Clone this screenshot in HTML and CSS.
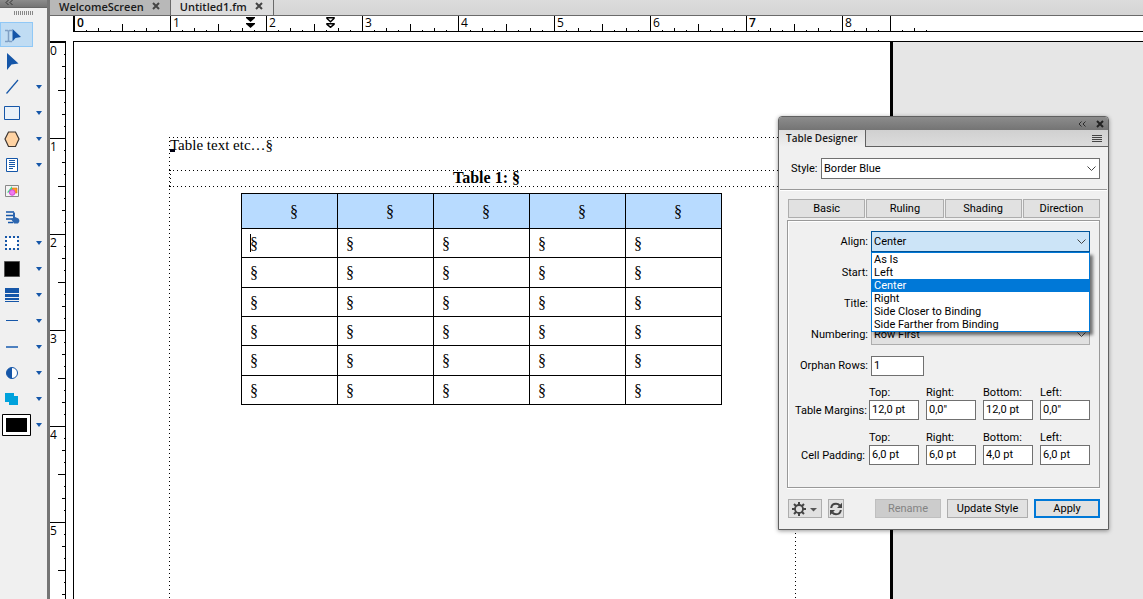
FILE: index.html
```html
<!DOCTYPE html>
<html lang="en">
<head>
<meta charset="utf-8">
<title>Untitled1.fm</title>
<link rel="stylesheet" href="styles.css">
</head>
<body>
<aside class="tools">
  <div class="tools-head"><svg width="8" height="6" viewBox="0 0 8 6"><path d="M3.500 0 1 2.500 3.500 5M7.500 0 5 2.500 7.500 5" fill="none" stroke="#333"/></svg></div>
  <div class="grip"></div>
  <div class="tool"><button class="tool-btn selected" aria-label="Smart select"><svg viewBox="0 0 33 26"><path d="M5 8.500h2.500l1 1 1-1H12M8.500 9v10M5 19.500h2.500l1-1 1 1H12" fill="none" stroke="#7f9fc4" stroke-width="1.500"/><path d="M12.500 7v12.500l3-3.500 5.500-1z" fill="#1556a8"/></svg></button></div>
  <div class="tool"><button class="tool-btn" aria-label="Select object"><svg viewBox="0 0 33 26"><path d="M7 5v17l4.500-5.500 7-1z" fill="#1556a8"/></svg></button></div>
  <div class="tool"><button class="tool-btn" aria-label="Line"><svg viewBox="0 0 33 26"><path d="M6.500 19.500 18 6" stroke="#1556a8" stroke-width="1.200"/></svg></button><i class="caret"></i></div>
  <div class="tool"><button class="tool-btn" aria-label="Rectangle"><svg viewBox="0 0 33 26"><path d="M4.500 6.500h15v13h-15z" fill="#eaf1f8" stroke="#1556a8"/></svg></button><i class="caret"></i></div>
  <div class="tool"><button class="tool-btn" aria-label="Polygon"><svg viewBox="0 0 33 26"><path d="M8.500 6h7l3.500 7-3.500 7.500h-7L5 13z" fill="#ffd3a3" stroke="#3d3530" stroke-width="1.200"/></svg></button><i class="caret"></i></div>
  <div class="tool"><button class="tool-btn" aria-label="Text frame"><svg viewBox="0 0 33 26"><path d="M6.500 6.500h11v13h-11z" fill="#fff" stroke="#1556a8"/><path d="M9 8.500h6M9 10.500h6M9 12.500h6M9 14.500h6M9 16.500h4" stroke="#1556a8"/></svg></button><i class="caret"></i></div>
  <div class="tool"><button class="tool-btn" aria-label="Anchored frame"><svg viewBox="0 0 33 26"><path d="M5.500 7.500h13v11h-13z" fill="#f4f4f4" stroke="#888"/><path d="M12 10h5v5h-5z" fill="#ff9a1f" stroke="#d77b10" stroke-width=".6"/><path d="M7 14.500 12 8v6.500z" fill="#3ddc84"/><circle cx="12.200" cy="14.500" r="2.800" fill="#f07cf0" stroke="#d545d5"/></svg></button></div>
  <div class="tool"><button class="tool-btn" aria-label="Hotspot"><svg viewBox="0 0 33 26"><path d="M6 8h8M6 11.500h8M6 15h7M8 18.500h5" stroke="#1556a8" stroke-width="1.700"/><path d="M13 8.500h2V13l3.500 1.500c1.500 2 1 3.500-.5 5h-4l-3-4.500 2-.5z" fill="#2d66b0"/></svg></button></div>
  <div class="tool"><button class="tool-btn" aria-label="Border"><svg viewBox="0 0 33 26"><path d="M6.500 7.500h11v11h-11z" fill="#fff"/><path d="M5 7h14M5 19h14" stroke="#1556a8" stroke-width="2" stroke-dasharray="2"/><path d="M6 6v14M18 6v14" stroke="#1556a8" stroke-width="2" stroke-dasharray="2"/></svg></button><i class="caret"></i></div>
  <div class="tool"><button class="tool-btn" aria-label="Fill"><svg viewBox="0 0 33 26"><path d="M4.500 5.500h15v15h-15z" stroke="#555"/></svg></button><i class="caret"></i></div>
  <div class="tool"><button class="tool-btn" aria-label="Line width"><svg viewBox="0 0 33 26"><path d="M5 6h14v5H5zM5 12h14v3H5zM5 16h14v2H5zM5 19h14v1H5z" fill="#1556a8"/></svg></button><i class="caret"></i></div>
  <div class="tool"><button class="tool-btn" aria-label="Line style"><svg viewBox="0 0 33 26"><path d="M6 12.500h12" stroke="#1556a8"/></svg></button><i class="caret"></i></div>
  <div class="tool"><button class="tool-btn" aria-label="Line end"><svg viewBox="0 0 33 26"><path d="M6 13h12" stroke="#4d80bf" stroke-width="2"/></svg></button><i class="caret"></i></div>
  <div class="tool"><button class="tool-btn" aria-label="Tint"><svg viewBox="0 0 33 26"><circle cx="12" cy="13" r="5.500" fill="#fff" stroke="#1556a8"/><path d="M12 7.500a5.500 5.500 0 0 0 0 11z" fill="#1556a8"/></svg></button><i class="caret"></i></div>
  <div class="tool"><button class="tool-btn" aria-label="Overprint"><svg viewBox="0 0 33 26"><path d="M5 7h9v3h4v9H9v-3H5z" fill="#00a2dc"/></svg></button><i class="caret"></i></div>
  <div class="tool"><button class="tool-btn" aria-label="Color"><svg viewBox="0 0 33 26"><path d="M2.500 2.500h28v21h-28z" fill="#fff" stroke="#000"/><path d="M6 6h21v14H6z"/></svg></button><i class="caret"></i></div>
</aside>

<main class="editor">
  <nav class="doc-tabs">
    <div class="doc-tab"><span>WelcomeScreen</span><button class="close" aria-label="Close WelcomeScreen"><svg width="8" height="8" viewBox="0 0 8 8"><path d="m1 1 6 6M7 1 1 7" stroke="#444" stroke-width="2"/></svg></button></div>
    <div class="doc-tab current"><span>Untitled1.fm</span><button class="close" aria-label="Close Untitled1.fm"><svg width="8" height="8" viewBox="0 0 8 8"><path d="m1 1 6 6M7 1 1 7" stroke="#444" stroke-width="2"/></svg></button></div>
  </nav>
  <div class="ruler-h">
    <span class="unit strong">0</span><span class="unit">1</span><span class="unit">2</span><span class="unit">3</span><span class="unit">4</span><span class="unit">5</span><span class="unit">6</span><span class="unit strong">7</span><span class="unit half">8</span><span class="unit half"></span>
    <svg class="marker first-indent" width="9" height="11" viewBox="0 0 9 11"><path d="M0 0h9v1L4.500 5 0 1zM0 6h9v1l-4.500 4L0 7z"/></svg>
    <svg class="marker tab-indent" width="9" height="11" viewBox="0 0 9 11"><path d="M1 .700h7v.8L4.500 4.700 1 1.500zM1 6.700h7v.6L4.500 10.300 1 7.300z" fill="none" stroke="#000" stroke-width="1.500"/></svg>
  </div>
  <div class="workspace">
    <div class="ruler-v"><span class="unit">0</span><span class="unit">1</span><span class="unit">2</span><span class="unit">3</span><span class="unit">4</span><span class="unit">5</span></div>
    <div class="canvas">
      <article class="page">
        <div class="text-frame">
          <p class="para"><i class="anchor"></i>Table text etc…§</p>
          <div class="title-frame">Table 1: §</div>
          <table class="doc-table">
            <thead><tr><th>§</th><th>§</th><th>§</th><th>§</th><th>§</th></tr></thead>
            <tbody>
              <tr><td><i class="cursor"></i>§</td><td>§</td><td>§</td><td>§</td><td>§</td></tr>
              <tr class="tall"><td>§</td><td>§</td><td>§</td><td>§</td><td>§</td></tr>
              <tr><td>§</td><td>§</td><td>§</td><td>§</td><td>§</td></tr>
              <tr><td>§</td><td>§</td><td>§</td><td>§</td><td>§</td></tr>
              <tr class="tall"><td>§</td><td>§</td><td>§</td><td>§</td><td>§</td></tr>
              <tr><td>§</td><td>§</td><td>§</td><td>§</td><td>§</td></tr>
            </tbody>
          </table>
        </div>
      </article>
    </div>
  </div>
</main>

<section class="designer" aria-label="Table Designer">
  <header class="titlebar">
    <button class="bar-btn" aria-label="Collapse"><svg width="8" height="6" viewBox="0 0 8 6"><path d="M3.500.5 1 3l2.500 2.500M7.500.5 5 3l2.500 2.500" fill="none" stroke="#2b2b2b"/></svg></button>
    <button class="bar-btn" aria-label="Close"><svg width="8" height="8" viewBox="0 0 8 8"><path d="m1 1 6 6M7 1 1 7" stroke="#222" stroke-width="2"/></svg></button>
  </header>
  <div class="panel-tabs">
    <h1 class="panel-tab">Table Designer</h1>
    <div class="panel-rest"><button class="bar-btn" aria-label="Menu"><svg width="10" height="7" viewBox="0 0 10 7"><path d="M0 .5h10M0 2.500h10M0 4.500h10M0 6.500h10" stroke="#444"/></svg></button></div>
  </div>
  <div class="style-row">
    <label for="style">Style:</label>
    <span class="combo"><select id="style"><option>Border Blue</option></select><svg class="chev" viewBox="0 0 9 5"><path d="m.5.5 4 4 4-4"/></svg></span>
  </div>
  <div class="content">
    <div class="segments"><button>Basic</button><button>Ruling</button><button>Shading</button><button>Direction</button></div>
    <div class="group">
      <div class="field"><label for="align">Align:</label>
        <span class="combo open"><select id="align"><option>Center</option></select><svg class="chev" viewBox="0 0 9 5"><path d="m.5.5 4 4 4-4"/></svg>
          <ul class="options" role="listbox" aria-label="Align"><li role="option">As Is</li><li role="option">Left</li><li role="option" class="active" aria-selected="true">Center</li><li role="option">Right</li><li role="option">Side Closer to Binding</li><li role="option">Side Farther from Binding</li></ul></span></div>
      <div class="field"><label for="start">Start:</label><span class="combo flat"><select id="start"></select></span></div>
      <div class="field"><label for="title">Title:</label><span class="combo flat"><select id="title"></select></span></div>
      <div class="field"><label for="numbering">Numbering:</label><span class="combo flat"><select id="numbering"><option>Row First</option></select><svg class="chev" viewBox="0 0 9 5"><path d="m.5.5 4 4 4-4"/></svg></span></div>
      <div class="field"><label for="orphan">Orphan Rows:</label><input class="short" id="orphan" value="1"></div>
      <div class="quad">
        <span class="quad-name">Table Margins:</span>
        <label>Top:<input value="12,0 pt"></label><label>Right:<input value="0,0&quot;"></label><label>Bottom:<input value="12,0 pt"></label><label>Left:<input value="0,0&quot;"></label>
      </div>
      <div class="quad">
        <span class="quad-name">Cell Padding:</span>
        <label>Top:<input value="6,0 pt"></label><label>Right:<input value="6,0 pt"></label><label>Bottom:<input value="4,0 pt"></label><label>Left:<input value="6,0 pt"></label>
      </div>
    </div>
    <footer class="actions">
      <button class="gear" aria-label="Options"><svg width="26" height="14" viewBox="0 0 26 14"><g stroke="#444" fill="none"><circle cx="7" cy="7" r="4" stroke-width="1.800"/><path d="M7 0v3M7 11v3M0 7h3M11 7h3M2 2l2 2M10 10l2 2M12 2l-2 2M4 10l-2 2" stroke-width="2"/></g><path d="M18 6h7l-3.500 3.500z" fill="#555"/></svg></button>
      <button class="refresh" aria-label="Refresh"><svg width="12" height="14" viewBox="0 0 12 14"><path d="M1.200 6C1.500 3 3.500 1.700 6 1.700c1.500 0 2.800.6 3.800 1.800M10.800 8c-.3 3-2.300 4.300-4.800 4.300-1.500 0-2.800-.6-3.800-1.800" fill="none" stroke="#444" stroke-width="2"/><path d="M12 .8V6H7zM0 13.200V8h5z" fill="#444"/></svg></button>
      <span class="spacer"></span>
      <button class="rename" disabled>Rename</button>
      <button class="update">Update Style</button>
      <button class="apply">Apply</button>
    </footer>
  </div>
</section>
</body>
</html>
```
FILE: styles.css
```css
* { box-sizing: border-box; }
body { margin: 0; height: 100vh; display: flex; overflow: hidden; position: relative; background: #fff; color: #000; font: 11px/13px Roboto, "Liberation Sans", sans-serif; }
button, input, select { font: inherit; color: inherit; margin: 0; padding: 0; border-radius: 0; }
svg { display: block; }

/* Tool palette */
.tools { flex: none; width: 50px; background: #f0f0f0; border-right: 3px solid #757575; }
.tools-head { height: 8px; padding-left: 5px; background: linear-gradient(#8c8c8c, #757575); border-bottom: 1px solid #666; }
.grip { width: 19px; height: 4px; margin: 3px 0 7px 14px; background: repeating-linear-gradient(90deg, #888 0 1px, transparent 1px 2px); }
.tool { display: flex; align-items: flex-start; height: 26px; gap: 3px; }
.tool-btn { width: 33px; height: 26px; border: 0; background: none; }
.tool-btn svg { width: 33px; height: 26px; }
.tool-btn.selected { background: #c0dcf3; box-shadow: inset 0 0 0 1px #90c8f6; height: 25px; overflow: hidden; }
.caret { margin-top: 11px; border: 3px solid transparent; border-top: 4px solid #1556a8; border-bottom: 0; }

/* Document window */
.editor { flex: 1; min-width: 0; display: flex; flex-direction: column; }
.doc-tabs { flex: none; height: 16px; display: flex; background: linear-gradient(#dcdcdc, #d4d4d4); border-bottom: 1px solid #6a6a6a; }
.doc-tab { display: flex; align-items: center; gap: 8px; padding: 0 10px 0 9px; background: #b8b8b8; border-right: 1px solid #6a6a6a; font: 600 11px/13px "Open Sans", sans-serif; color: #1a1a1a; }
.doc-tab span { padding-bottom: 3px; }
.doc-tab.current { background: #dcdcdc; }
.close { border: 0; background: none; padding-bottom: 3px; }

.ruler-h { flex: none; position: relative; height: 16px; margin-left: 23px; border-left: 1px solid #000; border-bottom: 1px solid #000; display: flex; font: 12px/14px "Open Sans", sans-serif; }
.ruler-h .unit { flex: none; width: 96px; height: 15px; padding-left: 2px; border-left: 1px solid #000; background-origin: border-box; background-repeat: no-repeat;
  background-image: linear-gradient(#000, #000), linear-gradient(#000, #000), linear-gradient(#000, #000), repeating-linear-gradient(90deg, #000 0 1px, transparent 1px 12px);
  background-position: 48px 100%, 24px 100%, 72px 100%, 0 100%;
  background-size: 1px 7px, 1px 3px, 1px 3px, 100% 1px; }
.ruler-h .half { width: 48px; }
.ruler-h .strong { font-weight: 600; }
.marker { position: absolute; top: 1px; }
.first-indent { left: 172px; }
.tab-indent { left: 252px; }

.workspace { flex: 1; min-height: 0; display: flex; gap: 7px; padding-top: 9px; }
.ruler-v { flex: none; width: 16px; overflow: hidden; border-top: 1px solid #000; border-right: 1px solid #000; font: 12px/14px "Open Sans", sans-serif; }
.ruler-v .unit { display: block; height: 96px; padding-top: 1px; border-top: 1px solid #000; background-origin: border-box; background-repeat: no-repeat;
  background-image: linear-gradient(#000, #000), linear-gradient(#000, #000), linear-gradient(#000, #000), repeating-linear-gradient(#000 0 1px, transparent 1px 12px);
  background-position: 100% 48px, 100% 24px, 100% 72px, 100% 0;
  background-size: 7px 1px, 3px 1px, 3px 1px, 1px 100%; }

.canvas { flex: 1; min-width: 0; overflow: hidden; background: #e6e6e6; border-top: 1px solid #000; border-left: 1px solid #000; }
.page { width: 819px; min-height: 100%; padding: 95px 94px 0 95px; background: #fff; border-right: 3px solid #000; display: flex; }
.text-frame { flex: 1; min-height: 480px; font: 15px/17px "Liberation Serif", serif;
  background: repeating-linear-gradient(90deg, #000 0 1px, transparent 1px 4px) 0 0 / 100% 1px no-repeat,
    repeating-linear-gradient(#000 0 1px, transparent 1px 4px) 0 0 / 1px 100% no-repeat,
    repeating-linear-gradient(#000 0 1px, transparent 1px 4px) 100% 0 / 1px 100% no-repeat; }
.para { margin: 0; padding-left: 1px; height: 33px; position: relative; }
.anchor { position: absolute; left: 1px; top: 12px; width: 5px; height: 3px; background: #001; }
.title-frame { height: 17px; padding-left: 8px; text-align: center; font-size: 16px; font-weight: bold; line-height: 15px;
  background: repeating-linear-gradient(90deg, #000 0 1px, transparent 1px 4px) 0 0 / 100% 1px no-repeat,
    repeating-linear-gradient(90deg, #000 0 1px, transparent 1px 4px) 0 100% / 100% 1px no-repeat,
    repeating-linear-gradient(#000 0 1px, transparent 1px 4px) 1px 0 / 1px 100% no-repeat; }
.doc-table { margin: 6px 0 0 72px; width: 481px; border-collapse: collapse; table-layout: fixed; font-size: 16px; }
.doc-table th, .doc-table td { border: 1px solid #000; }
.doc-table th { height: 35px; padding: 0 0 0 9px; background: #b8dbff; font-weight: normal; }
.doc-table td { height: 29px; padding: 0 0 0 8px; position: relative; }
.doc-table .tall td { height: 30px; }
.cursor { position: absolute; left: 8px; top: 5px; width: 1px; height: 18px; background: #000; }

/* Table Designer panel */
.designer { position: absolute; left: 778px; top: 116px; width: 331px; background: #f0f0f0; border: 1px solid #606060; border-radius: 4px 4px 0 0; box-shadow: 0 1px 4px #0006; }
.titlebar { height: 13px; display: flex; justify-content: flex-end; align-items: center; gap: 10px; padding-right: 4px; background: linear-gradient(#8c8c8c, #747474); border-radius: 3px 3px 0 0; }
.bar-btn { border: 0; background: none; }
.panel-tabs { display: flex; height: 17px; }
.panel-tab { margin: 0; padding: 1px 7px 0; font: 600 10px/14px "Open Sans", sans-serif; color: #1a1a1a; background: linear-gradient(#dedede, #f0f0f0); border-right: 1px solid #606060; }
.panel-rest { flex: 1; display: flex; justify-content: flex-end; align-items: center; padding-right: 6px; background: linear-gradient(#d0d0d0, #dcdcdc); border-bottom: 1px solid #606060; }
.style-row { display: flex; align-items: center; justify-content: space-between; margin: 0 1px; padding: 11px 7px 10px 11px; border-bottom: 1px solid #999; box-shadow: 0 1px #fff; }
.style-row label { width: 30px; }
.combo { flex: 1; position: relative; display: block; height: 21px; }
.combo select { display: block; width: 100%; height: 21px; padding: 0 2px; appearance: none; background: #fff; border: 1px solid #707070; }
.chev { position: absolute; right: 4px; top: 8px; width: 9px; height: 5px; fill: none; stroke: #444; }
.combo.open select { background: #cce4f7; border-color: #005499; }
.combo.flat select { background: #e1e1e1; border-color: #adadad; }
.content { padding: 9px 8px 11px; }
.segments { display: grid; grid-template-columns: repeat(4, 1fr); column-gap: 1px; margin-left: 1px; }
.segments button, .actions button { height: 19px; background: #e1e1e1; border: 1px solid #adadad; display: flex; align-items: center; justify-content: center; }
.group { margin-top: 2px; padding: 10px 9px 11px; border: 1px solid #999; box-shadow: inset 1px 1px #fff, 0 1px #fff; }
.field { display: flex; align-items: center; gap: 3px; height: 21px; margin-bottom: 10px; }
.field label { width: 71px; text-align: right; white-space: nowrap; flex: none; }
.short { width: 53px; }
.group input { height: 20px; padding: 0 2px 1px; background: #fff; border: 1px solid #707070; }
.options { position: absolute; z-index: 2; top: 21px; left: 0; width: 100%; margin: 0; padding: 0; list-style: none; background: #fff; border: 1px solid #0078d7; box-shadow: 3px 3px 3px #0008; }
.options li { height: 13px; padding-left: 2px; line-height: 14px; }
.options .active { background: #0078d7; color: #fff; }
.quad { display: grid; grid-template-columns: 67px repeat(4, 50px); column-gap: 7px; justify-content: end; align-items: end; margin-bottom: 11px; }
.quad-name { margin: 0 -3px 3px 0; text-align: right; white-space: nowrap; }
.quad input { display: block; width: 50px; margin-top: 1px; }
.quad label { white-space: nowrap; }
.actions { display: flex; gap: 6px; margin: 11px 0 0 1px; }
.spacer { flex: 1; }
.gear { width: 34px; }
.refresh { width: 16px; }
.rename { width: 66px; }
.actions .rename { background: #ccc; border-color: #bfbfbf; color: #838383; }
.update { width: 81px; }
.apply { width: 66px; }
.actions .apply { border: 2px solid #0078d7; }
```
